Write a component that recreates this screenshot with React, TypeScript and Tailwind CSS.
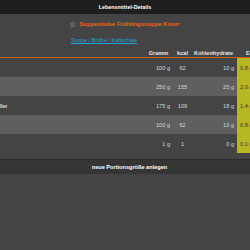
import { Star } from "lucide-react";

const rows = [
  { label: "", gramm: "100 g", kcal: "62", kh: "10 g", fett: "0,8 g" },
  { label: "", gramm: "250 g", kcal: "155", kh: "25 g", fett: "2,0 g" },
  { label: "Suppenteller", gramm: "175 g", kcal: "109", kh: "18 g", fett: "1,4 g" },
  { label: "", gramm: "100 g", kcal: "62", kh: "10 g", fett: "0,8 g" },
  { label: "", gramm: "1 g", kcal: "1", kh: "0 g", fett: "0,1 g" },
];

export default function App() {
  return (
    <div className="w-[250px] h-[250px] overflow-hidden bg-[#444444] font-['Liberation_Sans',Arial,sans-serif] text-[5.6px] leading-[8px]">
      <div className="h-[14px] bg-[#1e1e1e] flex items-center justify-center font-bold text-white text-[5.4px]">
        Lebensmittel-Details
      </div>

      <div className="mt-[6px] flex items-center justify-center gap-[3px] pr-[1px]">
        <Star size={7} strokeWidth={1.5} className="text-[#8a8a8a] fill-[#5a5a5a]" />
        <span className="text-[#e8670e] font-bold text-[6px]">Suppenliebe Frühlingssuppe Knorr</span>
      </div>

      <div className="mt-[8px] pl-[71px]">
        <span className="text-[#22a3dc] underline">Suppe / Brühe / Kaltschale</span>
      </div>

      <div className="mt-[5px] flex h-[8px] items-center border-b border-[#c0621a] box-content font-bold text-[#e6e6e6]">
        <div className="flex-1" />
        <div className="w-[27px] text-center">Gramm</div>
        <div className="w-[21px] text-center">kcal</div>
        <div className="w-[44px] text-center pr-[3px]">Kohlenhydrate</div>
        <div className="w-[13px] pl-[9px] whitespace-nowrap">Eiweiß</div>
      </div>

      {rows.map((r, i) => (
        <div
          key={i}
          className={`flex h-[19px] items-center text-[#d8d8d8] ${i % 2 === 1 ? "bg-[#5f5f5f]" : "bg-[#444444]"}`}
        >
          <div className="flex-1 overflow-hidden whitespace-nowrap">
            {r.label && <span className="-ml-[24px] block text-white">{r.label}</span>}
          </div>
          <div className="w-[27px] text-right pr-[2px]">{r.gramm}</div>
          <div className="w-[21px] text-center">{r.kcal}</div>
          <div className="w-[44px] text-right pr-[3px]">{r.kh}</div>
          <div className="w-[13px] h-full flex items-center bg-[#b7b624] pl-[3px] whitespace-nowrap text-[#333]">
            {r.fett}
          </div>
        </div>
      ))}

      <div className="mt-[6px] h-[15px] bg-[#353535] border-t border-[#2c2c2c] flex items-center justify-center pl-[9px] font-bold text-white">
        neue Portionsgröße anlegen
      </div>
    </div>
  );
}
